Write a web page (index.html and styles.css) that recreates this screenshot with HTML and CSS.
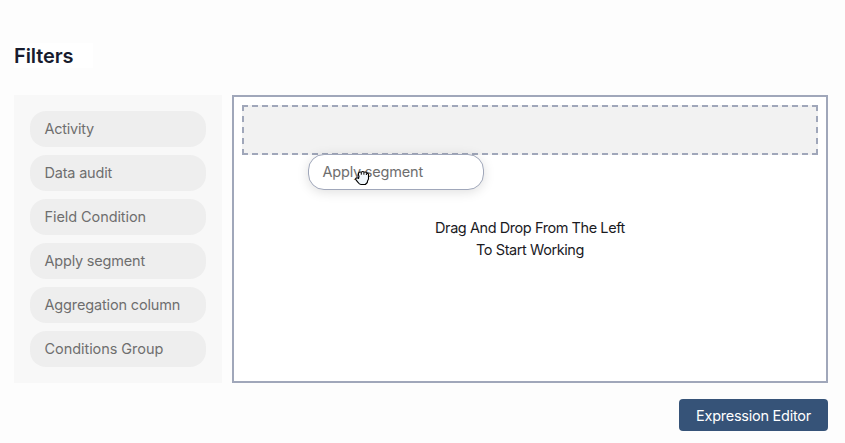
FILE: index.html
```html
<!DOCTYPE html>
<html lang="en">
<head>
<meta charset="utf-8">
<title>Filters</title>
<link rel="stylesheet" href="styles.css">
</head>
<body>
<main class="page">
  <h1 class="title">Filters</h1>
  <div class="builder">
    <aside class="palette">
      <div class="pill"><span class="t-activity">Activity</span></div>
      <div class="pill"><span class="t-audit">Data audit</span></div>
      <div class="pill"><span class="t-field">Field Condition</span></div>
      <div class="pill"><span class="t-segment">Apply segment</span></div>
      <div class="pill"><span class="t-aggregation">Aggregation column</span></div>
      <div class="pill"><span class="t-group">Conditions Group</span></div>
    </aside>
    <section class="canvas">
      <div class="dropzone"></div>
      <p class="hint"><span class="t-hint1">Drag And Drop From The Left</span><br><span class="t-hint2">To Start Working</span></p>
      <div class="pill dragging"><span class="t-segment">Apply segment</span>
        <svg class="cursor" width="16" height="16" viewBox="0 0 16 16"><path d="M3.5 8H1.5Q.2 8.3 1 9.8L3 12.3Q4.2 14.5 6 14.5H10.3L12.3 12.5Q12.3 11 13.5 9V4.5Q13.3 3 11.5 3.2 11 1.5 9 2.2 7.8.8 6.3 2.3 4.5 1.5 3.6 3Q3 4.2 4 6.5Z" fill="#f0f7fc" stroke="#000" stroke-width="1.1" stroke-linejoin="round"/><path d="M6.3 2.5V4.7M8.9 2.5V4.7M11.4 3.5V5M3.6 7.5V9" fill="none" stroke="#000"/></svg>
      </div>
    </section>
  </div>
  <button class="editor">Expression Editor</button>
</main>
</body>
</html>
```
FILE: styles.css
```css
* { box-sizing: border-box; }
body { margin: 0; background: #fdfdfd; font-family: Inter, sans-serif; }
.page { display: flex; flex-direction: column; width: 845px; height: 443px; padding: 43px 17px 12px 14px; }
.title { width: 79px; height: 25px; margin: 0 0 27px; background: #fff; color: #181c2e; font-size: 20px; line-height: 26px; font-weight: 600; letter-spacing: -.1px; white-space: nowrap; }
.builder { display: flex; gap: 10px; height: 288px; }
.palette { display: flex; flex-direction: column; gap: 8px; width: 208px; padding: 16px; background: #f8f8f8; }
.pill { height: 36px; padding: 0 14.5px; border-radius: 16px; background: #eee; color: #6e6e6e; font-size: 14.5px; line-height: 36px; white-space: nowrap; }
.t-activity { letter-spacing: -.25px; }
.t-audit { letter-spacing: -.2px; }
.t-field { letter-spacing: -.08px; }
.t-segment { letter-spacing: -.2px; }
.t-aggregation { letter-spacing: -.15px; }
.t-group { letter-spacing: -.06px; }
.canvas { position: relative; flex: 1; padding: 8px; border: 2px solid #a0a7ba; background: #fff; }
.dropzone { height: 50px; border: 2px dashed #a0a7ba; background: #f2f2f2; }
.hint { margin: 62px 0 0; color: #1b1b1f; font-size: 14.5px; line-height: 22px; text-align: center; white-space: nowrap; }
.t-hint1 { letter-spacing: -.43px; }
.t-hint2 { letter-spacing: -.42px; }
.dragging { position: absolute; left: 74px; top: 57px; width: 176px; padding: 0 13.5px; border: 1px solid #a0a7ba; background: #fff; line-height: 34px; box-shadow: 0 2px 12px rgba(0, 0, 0, .13); }
.cursor { position: absolute; left: 46px; top: 15px; }
.editor { align-self: flex-end; width: 149px; height: 32px; margin-top: 16px; padding: 0; border: 0; border-radius: 4px; background: #365378; color: #fff; font-family: inherit; font-size: 14.5px; line-height: 33px; letter-spacing: -.25px; white-space: nowrap; }
```
